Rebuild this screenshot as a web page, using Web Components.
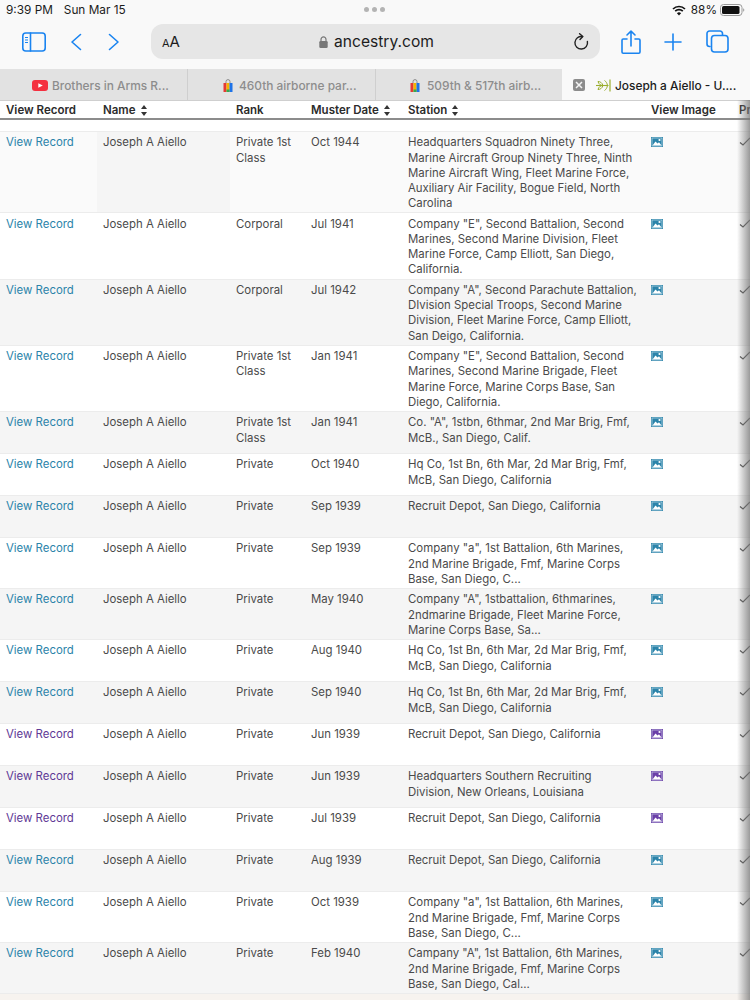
<!DOCTYPE html>
<html>
<head>
<meta charset="utf-8">
<title>Joseph a Aiello</title>
<style>
    html, body { margin: 0; padding: 0; background: #fff; }
    body { width: 750px; height: 1000px; overflow: hidden; font-family: Inter, "Liberation Sans", sans-serif; display: flex; flex-direction: column; }
</style>
</head>
<body>
<ios-status-bar></ios-status-bar>
<safari-toolbar></safari-toolbar>
<safari-tabs></safari-tabs>
<record-table></record-table>

<script>
class IosStatusBar extends HTMLElement {
    constructor() {
        super();
        this.attachShadow({ mode: 'open' });
        this.shadowRoot.innerHTML = `
            <style>
                :host { display: flex; align-items: center; height: 20px; padding: 0 5px 0 6px; background: #f9f9f9; color: #1c1c1c; font-size: 11.8px; font-weight: 400; position: relative; }
                .time { margin-right: 11px; }
                .spacer { flex: 1; }
                .dots { position: absolute; left: 364px; top: 7px; display: flex; gap: 3px; }
                .dots i { width: 5px; height: 5px; border-radius: 50%; background: #b4b4b4; }
                .right { display: flex; align-items: center; gap: 5px; }
            </style>
            <span class="time">9:39 PM</span><span>Sun Mar 15</span>
            <span class="dots"><i></i><i></i><i></i></span>
            <span class="spacer"></span>
            <span class="right">
                <svg width="14" height="11" viewBox="0 0 14 11">
                    <path d="M1 4 A8.5 8.5 0 0 1 13 4" fill="none" stroke="#111" stroke-width="1.7"/>
                    <path d="M3.2 6.2 A5.4 5.4 0 0 1 10.8 6.2" fill="none" stroke="#111" stroke-width="1.7"/>
                    <path d="M7 10.6 L4.9 8.3 A3 3 0 0 1 9.1 8.3 Z" fill="#111"/>
                </svg>
                <span>88%</span>
                <svg width="25" height="12" viewBox="0 0 25 12" style="margin-left:-2px">
                    <rect x="0.5" y="0.5" width="21.5" height="11" rx="3" fill="none" stroke="#9a9a9a"/>
                    <rect x="2" y="2" width="17.5" height="8" rx="1.6" fill="#111"/>
                    <path d="M23.2 4.2 a2 2 0 0 1 0 3.6 Z" fill="#9a9a9a"/>
                </svg>
            </span>`;
    }
}

class SafariToolbar extends HTMLElement {
    constructor() {
        super();
        this.attachShadow({ mode: 'open' });
        const stroke = 'fill="none" stroke="#1a84f0" stroke-width="1.6" stroke-linecap="round" stroke-linejoin="round"';
        this.shadowRoot.innerHTML = `
            <style>
                :host { display: flex; align-items: center; height: 49px; background: #f9f9f9; box-sizing: border-box; padding: 0 0 6px 22px; }
                svg { display: block; flex: none; }
                .url { width: 449px; height: 35px; margin-left: 31px; border-radius: 12px; background: #e6e6e6; display: flex; align-items: center; padding: 0 11px; box-sizing: border-box; color: #1d1d1d; position: relative; }
                .aa { font-size: 15px; letter-spacing: 0; }
                .aa small { font-size: 11px; }
                .host { position: absolute; left: 168px; display: flex; align-items: center; gap: 6px; font-size: 15.6px; }
                .reload { margin-left: auto; }
                .actions { display: flex; align-items: center; margin-left: 21px; }
            </style>
            <svg width="24" height="20" viewBox="0 0 24 20"><rect x="0.8" y="1" width="22.4" height="18" rx="3" ${stroke}/><path d="M8.5 1V19" ${stroke}/><path d="M3 5.5H6M3 8H6M3 10.5H6" fill="none" stroke="#1a84f0" stroke-width="1.2"/></svg>
            <svg width="12" height="20" viewBox="0 0 12 20" style="margin-left:24px"><path d="M10.5 2.5 L2 10 L10.5 17.5" ${stroke}/></svg>
            <svg width="12" height="20" viewBox="0 0 12 20" style="margin-left:26px"><path d="M1.5 2.5 L10 10 L1.5 17.5" ${stroke}/></svg>
            <div class="url">
                <span class="aa"><small>A</small>A</span>
                <span class="host">
                    <svg width="9" height="12" viewBox="0 0 9 12"><path d="M2 5.5V3.4a2.5 2.5 0 0 1 5 0V5.5" fill="none" stroke="#777" stroke-width="1.2"/><rect x="0.3" y="5" width="8.4" height="7" rx="1.3" fill="#777"/></svg>
                    <span>ancestry.com</span>
                </span>
                <svg class="reload" width="16" height="18" viewBox="0 0 16 18"><path d="M9.5 3.6 A6.3 6.3 0 1 0 14.4 8.5" fill="none" stroke="#222" stroke-width="1.4" stroke-linecap="round"/><path d="M6.6 0.7 L9.8 3.6 L7 6.6" fill="none" stroke="#222" stroke-width="1.4" stroke-linecap="round" stroke-linejoin="round"/></svg>
            </div>
            <div class="actions">
                <svg width="20" height="24" viewBox="0 0 20 24"><path d="M6 9H2.2a1.2 1.2 0 0 0-1.2 1.2V22a1.2 1.2 0 0 0 1.2 1.2H17.8a1.2 1.2 0 0 0 1.2-1.2V10.2A1.2 1.2 0 0 0 17.8 9H14" ${stroke}/><path d="M10 16V1.5M6 5L10 1.2L14 5" ${stroke}/></svg>
                <svg width="18" height="18" viewBox="0 0 18 18" style="margin-left:23px"><path d="M9 1V17M1 9H17" ${stroke}/></svg>
                <svg width="23" height="23" viewBox="0 0 23 23" style="margin-left:24px"><path d="M4 16.5H3.5a2.5 2.5 0 0 1-2.5-2.5V3.5A2.5 2.5 0 0 1 3.5 1H14a2.5 2.5 0 0 1 2.5 2.5V5" ${stroke}/><rect x="5.5" y="5.5" width="16.5" height="16.5" rx="3" ${stroke}/></svg>
            </div>`;
    }
}

class SafariTabs extends HTMLElement {
    constructor() {
        super();
        this.attachShadow({ mode: 'open' });
        const bag = `<svg width="10" height="13" viewBox="0 0 10 13"><path d="M3 4V2.6a2 2 0 0 1 4 0V4" fill="none" stroke="#8a8a8a" stroke-width="1"/><rect x="0.5" y="4" width="3" height="9" fill="#e53935"/><rect x="3.5" y="4" width="3" height="9" fill="#f5b400"/><rect x="6.5" y="4" width="3" height="9" fill="#1e73e8"/><rect x="3.5" y="10.5" width="3" height="2.5" fill="#34a853"/></svg>`;
        this.shadowRoot.innerHTML = `
            <style>
                :host { display: grid; grid-template-columns: 188px 188px 186px 188px; height: 31px; background: #e2e2e2; font-size: 11.9px; font-weight: 500; color: #8d8d8d; }
                .tab { display: flex; align-items: center; gap: 4px; border-right: 1px solid #cfcfcf; white-space: nowrap; padding-top: 1px; padding-left: 32px; box-sizing: border-box; }
                .tab.bag { padding-left: 35px; }
                .tab.active { background: #f9f9f9; color: #1c1c1c; border-right: 0; padding-left: 11px; gap: 0; }
                .close { width: 12px; height: 12px; background: #8c8c8c; border-radius: 2px; display: grid; place-items: center; margin-right: 10px; }
            </style>
            <div class="tab">
                <svg width="16" height="11" viewBox="0 0 16 11"><rect width="16" height="11" rx="3" fill="#f4303f"/><path d="M6.3 3.2 L10.8 5.5 L6.3 7.8 Z" fill="#fff"/></svg>
                <span>Brothers in Arms R...</span>
            </div>
            <div class="tab bag">${bag}<span style="margin-left:2px">460th airborne par...</span></div>
            <div class="tab bag" style="border-right:0;padding-left:34px">${bag}<span style="margin-left:3px">509th &amp; 517th airb...</span></div>
            <div class="tab active">
                <span class="close"><svg width="8" height="8" viewBox="0 0 8 8"><path d="M1 1L7 7M7 1L1 7" stroke="#f4f4f4" stroke-width="1.5"/></svg></span>
                <svg width="16" height="13" viewBox="0 0 16 13" style="margin-right:4px"><path d="M15 0.5V12.5" stroke="#9aae2c" stroke-width="1.2"/><path d="M13.5 6.5H1" stroke="#9aae2c" stroke-width="1.1"/><path d="M8 6.5C7 3.5 5 2.5 3 2.5C3.6 5 5.5 6.5 8 6.5C5.5 6.5 3.6 8 3 10.5C5 10.5 7 9.5 8 6.5Z" fill="none" stroke="#9aae2c" stroke-width="1"/><path d="M12.5 6.5C12 4 11 2.5 9.5 1.5M12.5 6.5C12 9 11 10.5 9.5 11.5" fill="none" stroke="#9aae2c" stroke-width="1"/></svg>
                <span>Joseph a Aiello - U....</span>
            </div>`;
    }
}

class RecordRow extends HTMLElement {
    connectedCallback() {
        this.attachShadow({ mode: 'open' });
        const visited = this.hasAttribute('visited');
        const color = visited ? '#5f3a96' : '#2c84aa';
        const iconColor = this.hasAttribute('icon-visited') ? '#6b3fa8' : '#2c84aa';
        const lines = this.getAttribute('station').split('|').join('<br>');
        const rank = this.getAttribute('rank').split('|').join('<br>');
        this.shadowRoot.innerHTML = `
            <style>
                :host { display: grid; grid-template-columns: var(--cols); min-height: 42px; background: var(--row-bg, #fff); border-top: 1px solid #ececec; box-sizing: border-box; color: #4a4a4a; font-size: 11.4px; line-height: 15.2px; }
                :host([shade]) { --row-bg: #f5f5f5; }
                :host([first]) { --row-bg: #fafafa; }
                :host([first]) .name { background: #f5f5f5; }
                div { padding: 3.4px 0 1px 6px; white-space: nowrap; overflow: hidden; }
                .link { color: ${color}; }
                svg { display: block; margin-top: 2px; }
            </style>
            <div class="link">View Record</div>
            <div class="name">Joseph A Aiello</div>
            <div>${rank}</div>
            <div>${this.getAttribute('date')}</div>
            <div>${lines}</div>
            <div><svg width="12" height="10" viewBox="0 0 12 10"><rect width="12" height="10" fill="${iconColor}"/><rect x="1" y="1" width="10" height="8" fill="none" stroke="#dfeef5" stroke-width="0.6"/><path d="M1.5 8.5L4.5 4.5L6.5 6.5L8 5.2L10.5 8.5Z" fill="#fff"/><circle cx="8.5" cy="3" r="1.1" fill="#fff"/></svg></div>
            <div><svg width="12" height="10" viewBox="0 0 12 10"><path d="M1 5.5L4 8L11 1" fill="none" stroke="#555" stroke-width="1.2"/></svg></div>`;
    }
}

class RecordTable extends HTMLElement {
    constructor() {
        super();
        this.attachShadow({ mode: 'open' });
    }

    connectedCallback() {
        const sort = `<svg width="6" height="11" viewBox="0 0 6 11"><path d="M3 0L6 4H0ZM3 11L0 7H6Z" fill="#333"/></svg>`;
        const records = [
            ['Private 1st|Class', 'Oct 1944', 'Headquarters Squadron Ninety Three,|Marine Aircraft Group Ninety Three, Ninth|Marine Aircraft Wing, Fleet Marine Force,|Auxiliary Air Facility, Bogue Field, North|Carolina'],
            ['Corporal', 'Jul 1941', 'Company "E", Second Battalion, Second|Marines, Second Marine Division, Fleet|Marine Force, Camp Elliott, San Diego,|California.'],
            ['Corporal', 'Jul 1942', 'Company "A", Second Parachute Battalion,|DIvision Special Troops, Second Marine|Division, Fleet Marine Force, Camp Elliott,|San Deigo, California.'],
            ['Private 1st|Class', 'Jan 1941', 'Company "E", Second Battalion, Second|Marines, Second Marine Brigade, Fleet|Marine Force, Marine Corps Base, San|Diego, California.'],
            ['Private 1st|Class', 'Jan 1941', 'Co. "A", 1stbn, 6thmar, 2nd Mar Brig, Fmf,|McB., San Diego, Calif.'],
            ['Private', 'Oct 1940', 'Hq Co, 1st Bn, 6th Mar, 2d Mar Brig, Fmf,|McB, San Diego, California'],
            ['Private', 'Sep 1939', 'Recruit Depot, San Diego, California'],
            ['Private', 'Sep 1939', 'Company "a", 1st Battalion, 6th Marines,|2nd Marine Brigade, Fmf, Marine Corps|Base, San Diego, C...'],
            ['Private', 'May 1940', 'Company "A", 1stbattalion, 6thmarines,|2ndmarine Brigade, Fleet Marine Force,|Marine Corps Base, Sa...'],
            ['Private', 'Aug 1940', 'Hq Co, 1st Bn, 6th Mar, 2d Mar Brig, Fmf,|McB, San Diego, California'],
            ['Private', 'Sep 1940', 'Hq Co, 1st Bn, 6th Mar, 2d Mar Brig, Fmf,|McB, San Diego, California'],
            ['Private', 'Jun 1939', 'Recruit Depot, San Diego, California', 'v', 'v'],
            ['Private', 'Jun 1939', 'Headquarters Southern Recruiting|Division, New Orleans, Louisiana', 'v', 'v'],
            ['Private', 'Jul 1939', 'Recruit Depot, San Diego, California', 'v', 'v'],
            ['Private', 'Aug 1939', 'Recruit Depot, San Diego, California'],
            ['Private', 'Oct 1939', 'Company "a", 1st Battalion, 6th Marines,|2nd Marine Brigade, Fmf, Marine Corps|Base, San Diego, C...'],
            ['Private', 'Feb 1940', 'Campany "A", 1st Battalion, 6th Marines,|2nd Marine Brigade, Fmf, Marine Corps|Base, San Diego, Cal...']
        ];
        this.shadowRoot.innerHTML = `
            <style>
                :host { display: flex; flex-direction: column; flex: 1; min-height: 0; position: relative; overflow: hidden; background: #fff; --cols: 97px 133px 75px 97px 243px 88px 17px; }
                .head { display: grid; grid-template-columns: var(--cols); height: 15px; padding-top: 2px; border-top: 1px solid #cfcfcf; border-bottom: 2px solid #8c8c8c; font-size: 11.5px; font-weight: 600; color: #2b2b2b; line-height: 15px; background: #fff; flex: none; }
                .head span { padding-left: 6px; display: flex; align-items: center; gap: 5px; white-space: nowrap; overflow: hidden; }
                .gap { height: 11px; background: #fff; flex: none; }
                .foot { flex: 1; background: #f7f3ef; border-top: 1px solid #ececec; }
                .edge { position: absolute; top: 0; right: 0; bottom: 0; width: 13px; background: linear-gradient(to right, rgba(120,120,120,0), rgba(120,120,120,.75)); pointer-events: none; }
            </style>
            <div class="head">
                <span>View Record</span>
                <span>Name ${sort}</span>
                <span>Rank</span>
                <span>Muster Date ${sort}</span>
                <span>Station ${sort}</span>
                <span>View Image</span>
                <span>Pr</span>
            </div>
            <div class="gap"></div>
            <slot></slot>
            <div class="foot"></div>
            <div class="edge"></div>`;
        records.forEach((r, i) => {
            const row = document.createElement('record-row');
            row.setAttribute('rank', r[0]);
            row.setAttribute('date', r[1]);
            row.setAttribute('station', r[2]);
            if (r[3]) row.setAttribute('visited', '');
            if (r[4]) row.setAttribute('icon-visited', '');
            if (i === 0) row.setAttribute('first', '');
            else if (i % 2 === 0) row.setAttribute('shade', '');
            this.appendChild(row);
        });
    }
}

customElements.define('ios-status-bar', IosStatusBar);
customElements.define('safari-toolbar', SafariToolbar);
customElements.define('safari-tabs', SafariTabs);
customElements.define('record-row', RecordRow);
customElements.define('record-table', RecordTable);
</script>
</body>
</html>
